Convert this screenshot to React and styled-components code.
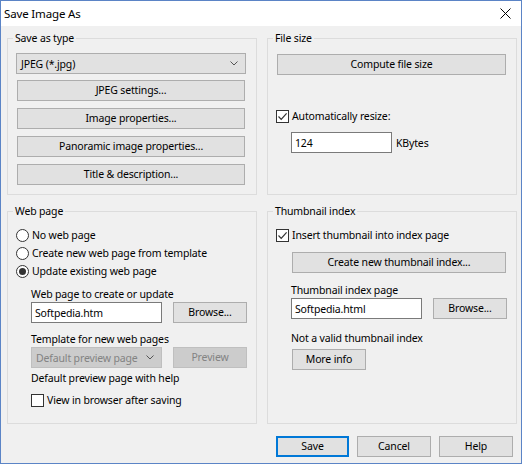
import React from 'react';
import styled, { createGlobalStyle } from 'styled-components';

const GlobalStyle = createGlobalStyle`
  html, body {
    margin: 0;
    padding: 0;
    background: #f0f0f0;
  }
  * {
    box-sizing: border-box;
  }
`;

const FONT = `"Noto Sans", "Liberation Sans", sans-serif`;

const Window = styled.div`
  width: 522px;
  height: 464px;
  border: 1px solid #5b84c6;
  background: #f0f0f0;
  display: flex;
  flex-direction: column;
  font-family: ${FONT};
  font-size: 10.5px;
  letter-spacing: -0.15px;
  color: #000;
  overflow: hidden;
`;

const TitleBar = styled.div`
  height: 25px;
  background: #fff;
  display: flex;
  align-items: center;
  justify-content: space-between;
  padding: 0 10px 0 3px;
  font-size: 11.5px;
`;

const Body = styled.div`
  padding: 4px 4px 0 6px;
  display: grid;
  grid-template-columns: 250px 250px;
  grid-template-rows: 165px 221px;
  column-gap: 10px;
  row-gap: 8px;
`;

const Group = styled.fieldset`
  margin: 0;
  min-width: 0;
  height: 100%;
  border: 1px solid #dcdcdc;
  padding: ${(p) => p.$pad || '7px 10px 0 8px'};
  display: flex;
  flex-direction: column;
  align-items: flex-start;
`;

const Legend = styled.legend`
  padding: 0 2px;
  margin-left: -3px;
  line-height: 16px;
  font-size: 10.5px;
`;

const Button = styled.button`
  font-family: ${FONT};
  font-size: 10.5px;
  letter-spacing: -0.15px;
  color: ${(p) => (p.disabled ? '#838383' : '#000')};
  background: ${(p) => (p.disabled ? '#cccccc' : '#e1e1e1')};
  border: ${(p) => (p.$default ? '2px solid #0078d7' : p.disabled ? '1px solid #bfbfbf' : '1px solid #adadad')};
  height: 21px;
  width: ${(p) => p.$w || 74}px;
  padding: 0;
  margin: ${(p) => p.$m || '0'};
  flex-shrink: 0;
  line-height: 1;
`;

const Combo = styled.div`
  display: flex;
  align-items: center;
  justify-content: space-between;
  height: 21px;
  width: ${(p) => p.$w}px;
  padding: 0 7px 0 4px;
  background: ${(p) => (p.$disabled ? '#cccccc' : '#e1e1e1')};
  border: 1px solid ${(p) => (p.$disabled ? '#bfbfbf' : '#adadad')};
  color: ${(p) => (p.$disabled ? '#838383' : '#000')};
  margin: ${(p) => p.$m || '0'};
  flex-shrink: 0;
`;

const Input = styled.div`
  height: 21px;
  width: ${(p) => p.$w}px;
  background: #fff;
  border: 1px solid #7a7a7a;
  display: flex;
  align-items: center;
  padding-left: 3px;
  flex-shrink: 0;
`;

const ButtonStack = styled.div`
  display: flex;
  flex-direction: column;
  gap: 7px;
  margin-left: 1px;
`;

const CheckRow = styled.div`
  display: flex;
  align-items: center;
  gap: 3px;
  height: ${(p) => p.$h || 16}px;
  margin: ${(p) => p.$m || '0'};
`;

const Box = styled.span`
  width: 13px;
  height: 13px;
  border: 1px solid #333;
  background: #fff;
  display: flex;
  align-items: center;
  justify-content: center;
`;

const Round = styled.span`
  width: 13px;
  height: 13px;
  border: 1px solid #333;
  border-radius: 50%;
  background: #fff;
  display: flex;
  align-items: center;
  justify-content: center;
  &::after {
    content: '';
    width: 7px;
    height: 7px;
    border-radius: 50%;
    background: ${(p) => (p.$on ? '#333' : 'transparent')};
  }
`;

const Indent = styled.div`
  padding-left: ${(p) => p.$pl || 15}px;
  display: flex;
  flex-direction: column;
  align-items: flex-start;
  width: 100%;
`;

const Label = styled.div`
  line-height: 16px;
  height: 16px;
  white-space: nowrap;
  margin: ${(p) => p.$m || '0'};
`;

const Line = styled.div`
  display: flex;
  align-items: center;
  gap: ${(p) => p.$gap || 11}px;
  margin: ${(p) => p.$m || '0'};
`;

const Footer = styled.div`
  display: flex;
  justify-content: flex-end;
  gap: 8px;
  margin-top: 12px;
  padding-right: 8px;
`;

const Chevron = () => (
  <svg width="8" height="5" viewBox="0 0 8 5">
    <path d="M0.5 0.5 L4 4 L7.5 0.5" fill="none" stroke={'#555'} strokeWidth="1" />
  </svg>
);

const Check = () => (
  <svg width="11" height="11" viewBox="0 0 11 11">
    <path d="M1.5 5.5 L4.2 8.3 L9.6 2.4" fill="none" stroke="#333" strokeWidth="1.2" />
  </svg>
);

const CloseIcon = () => (
  <svg width="11" height="11" viewBox="0 0 11 11">
    <path d="M0.5 0.5 L10.5 10.5 M10.5 0.5 L0.5 10.5" stroke="#000" strokeWidth="1" />
  </svg>
);

const CheckBox = ({ checked, children, m }) => (
  <CheckRow $m={m}>
    <Box>{checked && <Check />}</Box>
    <span>{children}</span>
  </CheckRow>
);

const Radio = ({ on, children }) => (
  <CheckRow $h={18}>
    <Round $on={on} />
    <span>{children}</span>
  </CheckRow>
);

export default function App() {
  return (
    <>
      <GlobalStyle />
      <Window>
        <TitleBar>
          <span>Save Image As</span>
          <CloseIcon />
        </TitleBar>
        <Body>
          <Group>
            <Legend>Save as type</Legend>
            <Combo $w={230} $m="0 0 6px 0">
              <span>JPEG (*.jpg)</span>
              <Chevron />
            </Combo>
            <ButtonStack>
              <Button $w={228}>JPEG settings...</Button>
              <Button $w={228}>Image properties...</Button>
              <Button $w={228}>Panoramic image properties...</Button>
              <Button $w={228}>Title &amp; description...</Button>
            </ButtonStack>
          </Group>

          <Group $pad="8px 10px 0 8px">
            <Legend>File size</Legend>
            <Button $w={229} $m="0 0 0 1px">Compute file size</Button>
            <CheckBox checked m="33px 0 0 0">Automatically resize:</CheckBox>
            <Indent>
              <Line $gap={4} $m="8px 0 0 0">
                <Input $w={101}>124</Input>
                <span>KBytes</span>
              </Line>
            </Indent>
          </Group>

          <Group>
            <Legend>Web page</Legend>
            <Radio>No web page</Radio>
            <Radio>Create new web page from template</Radio>
            <Radio on>Update existing web page</Radio>
            <Indent>
              <Label $m="6px 0 0 0">Web page to create or update</Label>
              <Line>
                <Input $w={131}>Softpedia.htm</Input>
                <Button>Browse...</Button>
              </Line>
              <Label $m="8px 0 0 0">Template for new web pages</Label>
              <Line>
                <Combo $w={131} $disabled>
                  <span>Default preview page</span>
                  <Chevron />
                </Combo>
                <Button disabled>Preview</Button>
              </Line>
              <Label $m="2px 0 0 0">Default preview page with help</Label>
              <CheckBox m="6px 0 0 0">View in browser after saving</CheckBox>
            </Indent>
          </Group>

          <Group $pad="8px 10px 0 8px">
            <Legend>Thumbnail index</Legend>
            <CheckBox checked>Insert thumbnail into index page</CheckBox>
            <Indent>
              <Button $w={214} $m="9px 0 0 1px">Create new thumbnail index...</Button>
              <Label $m="9px 0 0 0">Thumbnail index page</Label>
              <Line>
                <Input $w={131}>Softpedia.html</Input>
                <Button>Browse...</Button>
              </Line>
              <Label $m="11px 0 0 0">Not a valid thumbnail index</Label>
              <Button $m="3px 0 0 1px">More info</Button>
            </Indent>
          </Group>
        </Body>
        <Footer>
          <Button $default $w={73}>Save</Button>
          <Button>Cancel</Button>
          <Button>Help</Button>
        </Footer>
      </Window>
    </>
  );
}
